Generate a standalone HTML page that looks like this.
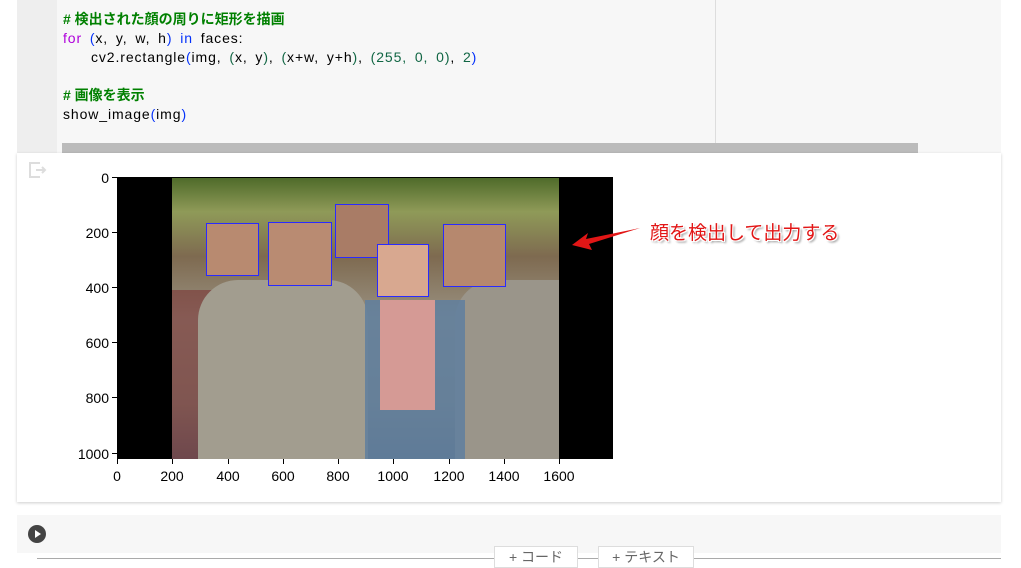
<!DOCTYPE html>
<html><head><meta charset="utf-8"><style>
body{margin:0;width:1021px;height:562px;background:#fff;position:relative;overflow:hidden;font-family:"Liberation Sans","Noto Sans CJK JP",sans-serif}
.abs{position:absolute}
.ln{position:absolute;left:63px;font-size:14px;line-height:19px;color:#000;white-space:pre;letter-spacing:0.9px;word-spacing:3px}
.c{color:#008000;font-weight:bold;letter-spacing:0;word-spacing:0}.k{color:#af00db}.b{color:#0431fa}.n{color:#116644}
.yt{position:absolute;right:912px;font-size:14px;color:#000;line-height:14px}
.xt{position:absolute;top:468px;font-size:14px;color:#000;transform:translateX(-50%)}
.tx{position:absolute;top:459px;width:1px;height:5px;background:#000}
.ty{position:absolute;left:112px;width:5px;height:1px;background:#000}
</style></head><body>
<div class="abs" style="left:17px;top:0;width:984px;height:153px;background:#f7f7f7"></div>
<div class="abs" style="left:17px;top:0;width:40px;height:153px;background:#eeeeee"></div>
<div class="abs" style="left:715px;top:0;width:1px;height:153px;background:#ddd"></div>
<div class="abs" style="left:62px;top:143px;width:856px;height:10px;background:#bbb"></div>
<div class="ln c" style="top:10px;left:63px"># 検出された顔の周りに矩形を描画</div>
<div class="ln" style="top:29px"><span class="k">for</span> <span class="b">(</span>x, y, w, h<span class="b">)</span> <span class="b">in</span> faces:</div>
<div class="ln" style="top:48px;left:91px">cv2.rectangle<span class="b">(</span>img, <span class="n">(</span>x, y<span class="n">)</span>, <span class="n">(</span>x+w, y+h<span class="n">)</span>, <span class="n">(255, 0, 0)</span>, <span class="n">2</span><span class="b">)</span></div>
<div class="ln c" style="top:86px"># 画像を表示</div>
<div class="ln" style="top:105px">show_image<span class="b">(</span>img<span class="b">)</span></div>
<div class="abs" style="left:17px;top:153px;width:984px;height:349px;background:#fff;box-shadow:0 1px 3px rgba(0,0,0,.2)"></div>
<svg class="abs" style="left:27px;top:160px" width="20" height="20" viewBox="0 0 20 20"><path d="M13 3H3v14h10M9 10h9M15 7l3 3-3 3" fill="none" stroke="#ddd" stroke-width="2"/></svg>
<div class="abs" style="left:117px;top:177px;width:496px;height:282px;background:#000;border:1px solid #000;box-sizing:border-box"></div>
<div class="abs" style="left:172px;top:178px;width:387px;height:281px;background:linear-gradient(180deg,#4f6b2a 0%,#8f9a58 12%,#7e6a50 28%,#9a9282 50%,#8a867a 80%,#5e6470 100%)"></div>
<div class="abs" style="left:172px;top:290px;width:40px;height:169px;background:#7a3535;opacity:.6"></div>
<div class="abs" style="left:198px;top:280px;width:170px;height:179px;background:#a29d8f;border-radius:40px 40px 0 0"></div>
<div class="abs" style="left:455px;top:280px;width:104px;height:179px;background:#9a958a;border-radius:40px 0 0 0"></div>
<div class="abs" style="left:365px;top:300px;width:100px;height:159px;background:#5f7f9f;opacity:.85"></div>
<div class="abs" style="left:380px;top:300px;width:55px;height:110px;background:#d59a95"></div>
<div class="abs" style="left:206px;top:223px;width:51px;height:51px;border:1px solid #2a2aff;background:#b88a70"></div>
<div class="abs" style="left:268px;top:222px;width:62px;height:62px;border:1px solid #2a2aff;background:#b98b72"></div>
<div class="abs" style="left:335px;top:204px;width:52px;height:52px;border:1px solid #2a2aff;background:#a97c66"></div>
<div class="abs" style="left:377px;top:244px;width:50px;height:51px;border:1px solid #2a2aff;background:#d8a890"></div>
<div class="abs" style="left:443px;top:224px;width:61px;height:61px;border:1px solid #2a2aff;background:#b6886e"></div>
<div class="yt" style="top:171px">0</div><div class="yt" style="top:226px">200</div><div class="yt" style="top:281px">400</div><div class="yt" style="top:336px">600</div><div class="yt" style="top:391px">800</div><div class="yt" style="top:447px">1000</div>
<div class="ty" style="top:177px"></div><div class="ty" style="top:232px"></div><div class="ty" style="top:287px"></div><div class="ty" style="top:342px"></div><div class="ty" style="top:397px"></div><div class="ty" style="top:453px"></div>
<div class="tx" style="left:117px"></div><div class="tx" style="left:172px"></div><div class="tx" style="left:228px"></div><div class="tx" style="left:283px"></div><div class="tx" style="left:338px"></div><div class="tx" style="left:393px"></div><div class="tx" style="left:449px"></div><div class="tx" style="left:504px"></div><div class="tx" style="left:559px"></div>
<div class="xt" style="left:117px">0</div><div class="xt" style="left:172px">200</div><div class="xt" style="left:228px">400</div><div class="xt" style="left:283px">600</div><div class="xt" style="left:338px">800</div><div class="xt" style="left:393px">1000</div><div class="xt" style="left:449px">1200</div><div class="xt" style="left:504px">1400</div><div class="xt" style="left:559px">1600</div>
<svg class="abs" style="left:560px;top:215px" width="90" height="40"><path d="M80 13 L26 24 L28 18 L12 30 L32 35 L29 29 Z" fill="#e21616"/></svg>
<div class="abs" style="left:650px;top:218px;font-size:19px;color:#e21616;text-shadow:1px 1px 0 #fff,-1px -1px 0 #fff,1px -1px 0 #fff,-1px 1px 0 #fff,2px 2px 2px #888">顔を検出して出力する</div>
<div class="abs" style="left:17px;top:515px;width:984px;height:38px;background:#f7f7f7"></div>
<div class="abs" style="left:28px;top:525px;width:18px;height:18px;border-radius:50%;background:#444"></div>
<svg class="abs" style="left:28px;top:525px" width="18" height="18"><path d="M7 5l6 4-6 4z" fill="#fff"/></svg>
<div class="abs" style="left:37px;top:558px;width:964px;height:1px;background:#aaa"></div>
<div class="abs" style="left:494px;top:546px;width:82px;height:20px;background:#fff;border:1px solid #ddd;font-size:14px;color:#666;text-align:center;line-height:20px">+ コード</div>
<div class="abs" style="left:598px;top:546px;width:94px;height:20px;background:#fff;border:1px solid #ddd;font-size:14px;color:#666;text-align:center;line-height:20px">+ テキスト</div>
</body></html>
